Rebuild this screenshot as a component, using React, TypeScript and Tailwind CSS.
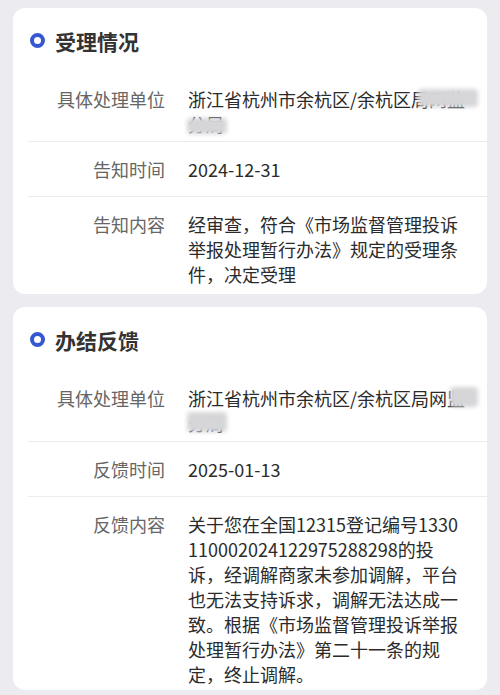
import React from 'react';

type Row = {
  label: string;
  lines: string[];
  pt: string;
  pb: string;
  blurs?: { l: number; t: number; w: number; h: number }[];
};

type Section = {
  title: string;
  rows: Row[];
};

const unitLines = ['浙江省杭州市余杭区/余杭区局网监', '分局'];

const sections: Section[] = [
  {
    title: '受理情况',
    rows: [
      {
        label: '具体处理单位',
        lines: unitLines,
        pt: 'pt-[14px]',
        pb: 'pb-[4px]',
        blurs: [
          { l: 230, t: 2, w: 60, h: 18 },
          { l: -1, t: 31, w: 40, h: 16 },
        ],
      },
      { label: '告知时间', lines: ['2024-12-31'], pt: 'pt-[15px]', pb: 'pb-[14px]' },
      {
        label: '告知内容',
        lines: ['经审查，符合《市场监督管理投诉', '举报处理暂行办法》规定的受理条', '件，决定受理'],
        pt: 'pt-[15px]',
        pb: 'pb-[7px]',
      },
    ],
  },
  {
    title: '办结反馈',
    rows: [
      {
        label: '具体处理单位',
        lines: unitLines,
        pt: 'pt-[14px]',
        pb: 'pb-[5px]',
        blurs: [
          { l: 262, t: 1, w: 28, h: 20 },
          { l: -1, t: 26, w: 40, h: 20 },
        ],
      },
      { label: '反馈时间', lines: ['2025-01-13'], pt: 'pt-[15px]', pb: 'pb-[14px]' },
      {
        label: '反馈内容',
        lines: [
          '关于您在全国12315登记编号1330',
          '110002024122975288298的投',
          '诉，经调解商家未参加调解，平台',
          '也无法支持诉求，调解无法达成一',
          '致。根据《市场监督管理投诉举报',
          '处理暂行办法》第二十一条的规',
          '定，终止调解。',
        ],
        pt: 'pt-[15px]',
        pb: 'pb-[3px]',
      },
    ],
  },
];

const InfoCard: React.FC<{ section: Section }> = ({ section }) => (
  <div className="bg-white rounded-[12px] mx-[13px]">
    {/* Header */}
    <div className="h-[65px] flex items-center pl-[17px]">
      <span className="w-[15px] h-[15px] rounded-full border-[4px] border-[#3558d2]" />
      <h2 className="ml-[10px] text-[21px] leading-[24px] font-bold text-[#333333]">{section.title}</h2>
    </div>

    {/* Rows */}
    <div className="ml-[15px]">
      {section.rows.map((row, i) => (
        <div
          key={row.label}
          className={`flex ${row.pt} ${row.pb} ${i < section.rows.length - 1 ? 'border-b border-[#ececec]' : ''}`}
        >
          <div className="w-[137px] shrink-0 text-right text-[18px] leading-[25px] text-[#666666]">{row.label}</div>
          <div className="relative ml-[23px] text-[18px] leading-[25px] text-[#2b2b2b] whitespace-nowrap">
            {row.lines.map((line) => (
              <div key={line}>{line}</div>
            ))}
            {row.blurs?.map((b, k) => (
              <div
                key={k}
                className="absolute bg-[#d6d6d9] blur-[2px] rounded-[4px]"
                style={{ left: b.l, top: b.t, width: b.w, height: b.h }}
              />
            ))}
          </div>
        </div>
      ))}
    </div>
  </div>
);

const App: React.FC = () => (
  <div
    className="w-[500px] h-[695px] overflow-hidden bg-[#ebebf0] pt-[8px] flex flex-col gap-[13px]"
    style={{ fontFamily: '"Noto Sans CJK SC", "Noto Sans", sans-serif' }}
  >
    {sections.map((s) => (
      <InfoCard key={s.title} section={s} />
    ))}
  </div>
);

export default App;
